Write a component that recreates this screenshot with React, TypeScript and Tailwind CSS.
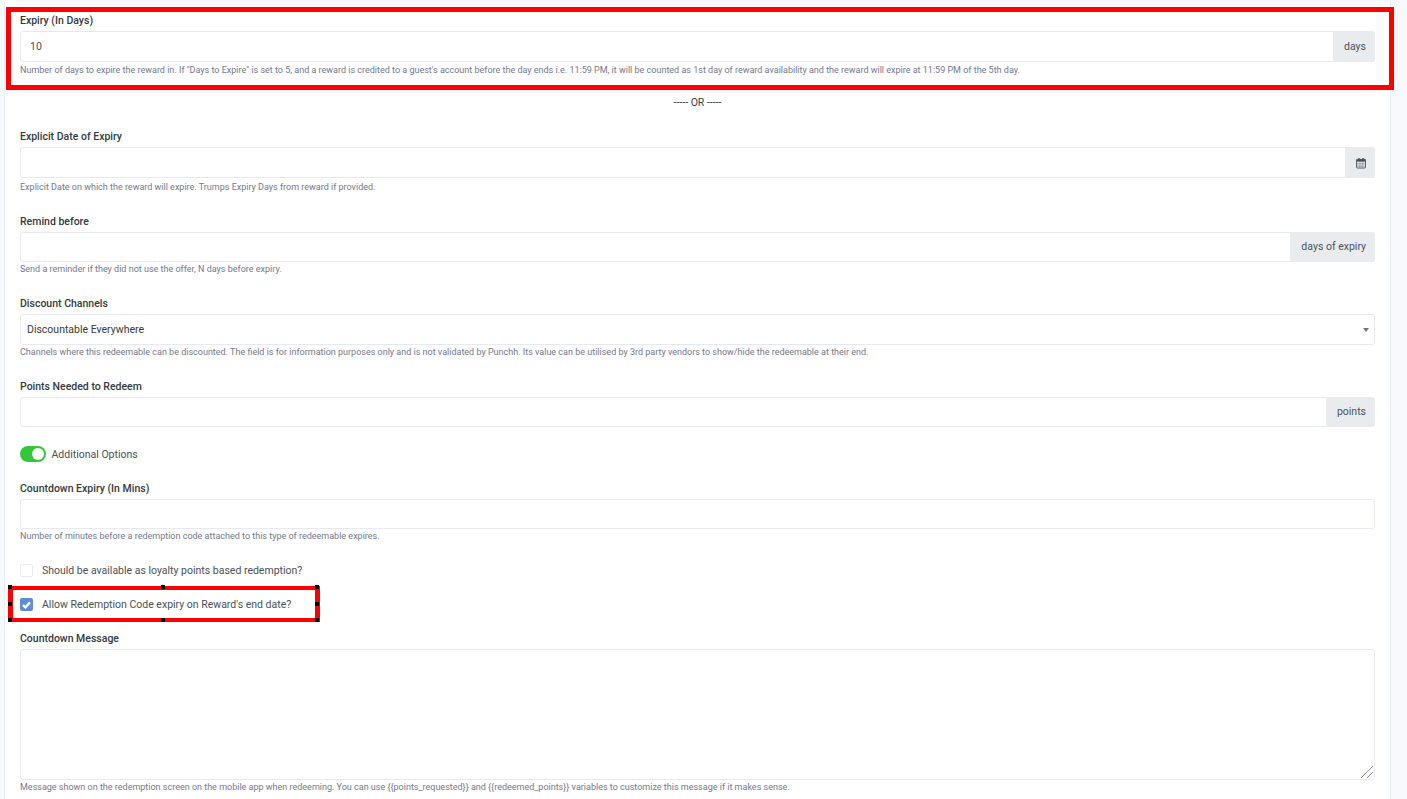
import React from "react";

function Label({ children }: { children: React.ReactNode }) {
  return <div className="h-4 mb-[3px] text-[10.5px] leading-[18px] font-medium text-[#343a40]">{children}</div>;
}

function Help({ children }: { children: React.ReactNode }) {
  return <div className="h-3 text-[9px] leading-3 text-[#74788d]">{children}</div>;
}

function Input({ h, value, addon }: { h: string; value?: string; addon?: React.ReactNode }) {
  return (
    <div className={`flex rounded-[3px] border border-[#e6e9f4] ${h}`}>
      <div className="flex-1 px-[9px] flex items-center text-[10.5px] text-[#495057]">{value}</div>
      {addon ? (
        <div className="-m-px flex items-center rounded-r-[3px] bg-[#e9ecef] pl-[11px] pr-[9px] text-[10.5px] text-[#495057]">{addon}</div>
      ) : null}
    </div>
  );
}

function CalendarIcon() {
  return (
    <svg width="10" height="12" viewBox="0 0 11 12">
      <rect x="0.5" y="2" width="10" height="9.5" rx="1" fill="none" stroke="#495057" />
      <rect x="0.5" y="2" width="10" height="2.5" fill="#495057" />
      <rect x="2.5" y="0.5" width="1.5" height="2.5" fill="#495057" />
      <rect x="7" y="0.5" width="1.5" height="2.5" fill="#495057" />
      <path d="M3.5 5v6M5.5 5v6M7.5 5v6M1 6.5h9M1 8.2h9M1 9.9h9" stroke="#8a9099" strokeWidth="0.6" />
    </svg>
  );
}

export default function App() {
  return (
    <div className="h-[799px] overflow-hidden bg-[#f8f9fd] pt-[2px] pl-[4px] pr-[16px] font-['Roboto',sans-serif]">
      <div className="h-[797px] border-x border-[#e6ecf8] bg-white px-[15px] pt-[10px]">
        <div className="relative">
          <div className="absolute -left-[14px] -right-[19px] -top-[5px] h-[83px] border-[5px] border-[#ff0000]" />
          <Label>Expiry (In Days)</Label>
          <Input h="h-[31px]" value="10" addon="days" />
          <div className="mt-[2px]">
            <Help>Number of days to expire the reward in. If "Days to Expire" is set to 5, and a reward is credited to a guest's account before the day ends i.e. 11:59 PM, it will be counted as 1st day of reward availability and the reward will expire at 11:59 PM of the 5th day.</Help>
          </div>
        </div>

        <div className="mt-[19px] h-[14px] text-center text-[10.5px] leading-[16px] text-[#343a40]">----- OR -----</div>

        <div className="mt-[19px]">
          <Label>Explicit Date of Expiry</Label>
          <Input h="h-[31px]" addon={<CalendarIcon />} />
          <div className="mt-[3px]"><Help>Explicit Date on which the reward will expire. Trumps Expiry Days from reward if provided.</Help></div>
        </div>

        <div className="mt-[20px]">
          <Label>Remind before</Label>
          <Input h="h-[30px]" addon="days of expiry" />
          <div className="mt-px"><Help>Send a reminder if they did not use the offer, N days before expiry.</Help></div>
        </div>

        <div className="mt-[20px]">
          <Label>Discount Channels</Label>
          <div className="flex h-[31px] items-center justify-between rounded-[3px] border border-[#e6e9f4] pl-[6px] pr-[5px] text-[10.5px] text-[#343a40]">
            <span>Discountable Everywhere</span>
            <span className="h-0 w-0 border-x-[3px] border-t-[4px] border-x-transparent border-t-[#777]" />
          </div>
          <div className="mt-px"><Help>Channels where this redeemable can be discounted. The field is for information purposes only and is not validated by Punchh. Its value can be utilised by 3rd party vendors to show/hide the redeemable at their end.</Help></div>
        </div>

        <div className="mt-[20px]">
          <Label>Points Needed to Redeem</Label>
          <Input h="h-[30px]" addon="points" />
        </div>

        <div className="mt-[19px] flex h-4 items-center gap-[5.5px]">
          <div className="flex h-4 w-[26px] items-center justify-end rounded-full bg-[#34c73b] pr-[2px]">
            <div className="h-3 w-3 rounded-full bg-white" />
          </div>
          <span className="pt-px text-[10.5px] text-[#495057]">Additional Options</span>
        </div>

        <div className="mt-[18px]">
          <Label>Countdown Expiry (In Mins)</Label>
          <Input h="h-[30px]" />
          <div className="mt-px"><Help>Number of minutes before a redemption code attached to this type of redeemable expires.</Help></div>
        </div>

        <div className="mt-[22px] flex h-[13px] items-center gap-[9px]">
          <div className="h-[13px] w-[13px] rounded-[2px] border border-[#e6e9f4]" />
          <span className="text-[10.5px] text-[#495057]">Should be available as loyalty points based redemption?</span>
        </div>

        <div className="relative mt-[21px] flex h-[13px] items-center gap-[9px]">
          <div className="absolute -left-[12px] -top-[12px] h-[36px] w-[312px] border-x-[5px] border-y-[4px] border-[#ff0000]">
            <span className="absolute -left-[5px] -top-[5px] h-[4px] w-[4px] bg-black" />
            <span className="absolute left-[148px] -top-[5px] h-[4px] w-[4px] bg-black" />
            <span className="absolute -right-[4px] -top-[5px] h-[4px] w-[4px] bg-black" />
            <span className="absolute -left-[5px] top-[12px] h-[4px] w-[4px] bg-black" />
            <span className="absolute -right-[4px] top-[12px] h-[4px] w-[4px] bg-black" />
            <span className="absolute -left-[5px] -bottom-[4px] h-[4px] w-[4px] bg-black" />
            <span className="absolute left-[148px] -bottom-[4px] h-[4px] w-[4px] bg-black" />
            <span className="absolute -right-[4px] -bottom-[4px] h-[4px] w-[4px] bg-black" />
          </div>
          <div className="flex h-[13px] w-[13px] items-center justify-center rounded-[2px] bg-[#5b8dd9]">
            <svg width="9" height="8" viewBox="0 0 9 8">
              <path d="M1 4.2 3.4 6.4 8 1.4" fill="none" stroke="#fff" strokeWidth="2.3" />
            </svg>
          </div>
          <span className="text-[10.5px] text-[#495057]">Allow Redemption Code expiry on Reward's end date?</span>
        </div>

        <div className="mt-[19px]">
          <Label>Countdown Message</Label>
          <div className="relative h-[131px] rounded-[3px] border border-[#e6e9f4]">
            <svg width="12" height="12" viewBox="0 0 12 12" className="absolute bottom-px right-px">
              <path d="M0 12 12 0M6 12 12 6" stroke="#555" strokeWidth="1" strokeDasharray="1 0.5" />
            </svg>
          </div>
          <div className="mt-px"><Help>Message shown on the redemption screen on the mobile app when redeeming. You can use {"{{points_requested}}"} and {"{{redeemed_points}}"} variables to customize this message if it makes sense.</Help></div>
        </div>
      </div>
    </div>
  );
}
